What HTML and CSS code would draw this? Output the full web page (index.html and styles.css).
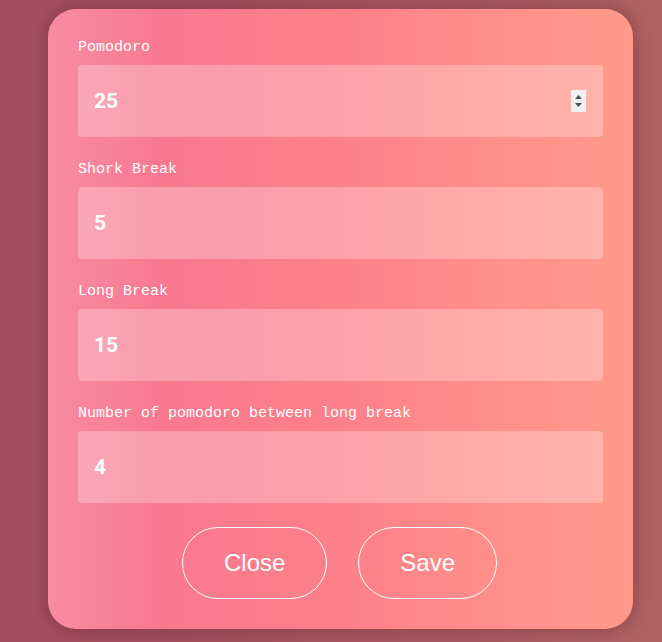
FILE: index.html
```html
<!DOCTYPE html>
<html>
<head>
<meta charset="utf-8">
<link rel="stylesheet" href="styles.css">
</head>
<body>
<div class="modal">
  <div class="field">
    <div class="label">Pomodoro</div>
    <div class="input">
      <span class="value">25</span>
      <span class="spinner">
        <svg width="15" height="22" viewBox="0 0 15 22"><rect width="15" height="22" fill="#f0f0f0"/><path d="M4 9 L7.5 5 L11 9 Z" fill="#505050"/><path d="M4 13 L11 13 L7.5 17 Z" fill="#505050"/></svg>
      </span>
    </div>
  </div>
  <div class="field">
    <div class="label">Shork Break</div>
    <div class="input"><span class="value">5</span></div>
  </div>
  <div class="field">
    <div class="label">Long Break</div>
    <div class="input"><span class="value">15</span></div>
  </div>
  <div class="field">
    <div class="label">Number of pomodoro between long break</div>
    <div class="input"><span class="value">4</span></div>
  </div>
  <div class="actions">
    <button class="btn">Close</button>
    <button class="btn">Save</button>
  </div>
</div>
</body>
</html>
```
FILE: styles.css
```css
html, body {
  margin: 0;
  height: 100%;
}
body {
  background: linear-gradient(90deg, #a44f5f 0%, #a34e5f 25%, #aa5861 60%, #b06262 100%);
  overflow: hidden;
}
.modal {
  box-sizing: border-box;
  width: 585px;
  height: 620px;
  margin: 9px 0 0 48px;
  padding: 30px 30px 0;
  border-radius: 28px;
  background: linear-gradient(90deg, #f78ca3 0%, #f8798f 19%, #fc8089 50%, #ff8c8a 72%, #ff9a8b 100%);
  box-shadow: 0 0 18px rgba(60, 10, 20, 0.35);
  display: flex;
  flex-direction: column;
}
.field {
  display: flex;
  flex-direction: column;
  margin-bottom: 24px;
}
.label {
  font-family: "Liberation Mono", "Courier New", monospace;
  font-size: 15px;
  line-height: 17px;
  color: #fff;
  margin-bottom: 9px;
}
.input {
  position: relative;
  box-sizing: border-box;
  height: 72px;
  border-radius: 4px;
  background: rgba(255, 255, 255, 0.27);
  padding: 0 16px;
  display: flex;
  align-items: center;
  color: #fff;
}
.value {
  font-family: Roboto, "Liberation Sans", Arial, sans-serif;
  font-weight: 700;
  font-size: 21px;
}
.spinner {
  position: absolute;
  right: 17px;
  top: 25px;
  width: 15px;
  height: 22px;
  display: block;
}
.spinner svg {
  display: block;
}
.actions {
  display: flex;
  justify-content: center;
  gap: 31px;
  margin-right: 2px;
}
.btn {
  box-sizing: border-box;
  height: 72px;
  padding: 0 41px;
  border: 1px solid #fff;
  border-radius: 36px;
  background: transparent;
  color: #fff;
  font-family: "Liberation Sans", Arial, sans-serif;
  font-size: 24px;
}
```
